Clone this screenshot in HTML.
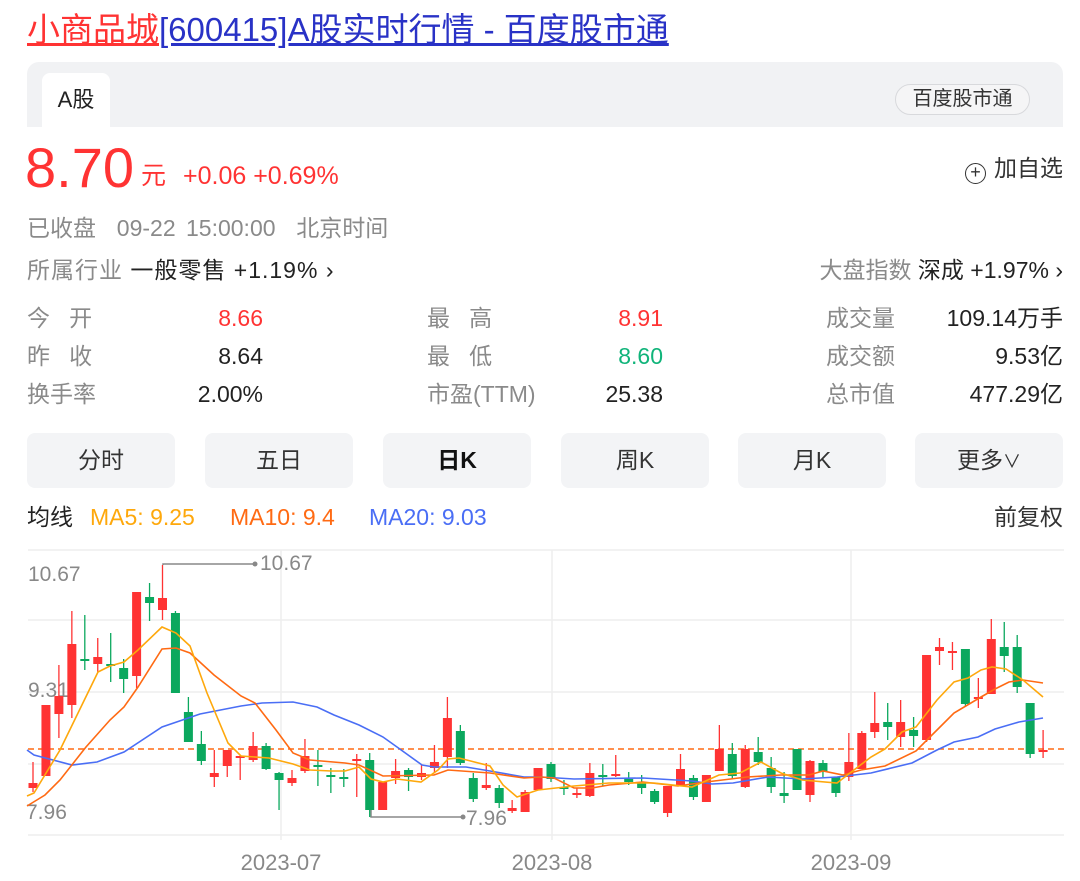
<!DOCTYPE html>
<html><head><meta charset="utf-8"><style>
*{margin:0;padding:0;box-sizing:border-box}
body{width:1080px;height:881px;background:#fff;font-family:"Liberation Sans","Noto Sans CJK SC",sans-serif;color:#222;position:relative;overflow:hidden}
.a{position:absolute;white-space:nowrap}
.g{color:#8a8a8a}
.r{color:#f33}
.btn{position:absolute;top:433px;width:148px;height:55px;background:#f3f4f6;border-radius:8px;font-size:23px;line-height:55px;text-align:center;color:#333}
.lab{font-size:23px;color:#8a8a8a}
.val{font-size:23px;text-align:right}
</style></head><body>
<div class="a" style="left:27px;top:9px;font-size:33px;line-height:42px;letter-spacing:0px"><span style="color:#f33;text-decoration:underline">小商品城</span><span style="color:#2932c6;text-decoration:underline">[600415]A股实时行情 - 百度股市通</span></div>
<div class="a" style="left:27px;top:62px;width:1036px;height:65px;background:#f1f2f4;border-radius:12px 12px 0 0"></div>
<div class="a" style="left:42px;top:73px;width:68px;height:54px;background:#fff;border-radius:8px 8px 0 0;font-size:22px;line-height:54px;text-align:center">A股</div>
<div class="a" style="left:895px;top:84px;width:135px;height:31px;border:1px solid #d8d9dc;border-radius:16px;background:#f5f5f6;font-size:20px;line-height:29px;text-align:center;color:#333">百度股市通</div>
<div class="a r" style="left:25px;top:136px;font-size:56px;line-height:64px">8.70</div>
<div class="a r" style="left:141px;top:160px;font-size:25px;line-height:32px">元</div>
<div class="a r" style="left:183px;top:160px;font-size:25px;line-height:32px">+0.06 +0.69%</div>
<div class="a" style="right:17px;top:153px;font-size:23px;line-height:30px;color:#333"><span style="display:inline-block;width:21px;height:21px;border:1.5px solid #333;border-radius:50%;text-align:center;line-height:17px;font-size:18px;vertical-align:-2px;margin-right:8px">+</span>加自选</div>
<div class="a g" style="left:27px;top:213px;font-size:23px;line-height:30px;word-spacing:4px">已收盘&nbsp; 09-22 15:00:00&nbsp; 北京时间</div>
<div class="a" style="left:27px;top:255px;font-size:23px;line-height:30px;letter-spacing:1px"><span class="g">所属行业</span> 一般零售 +1.19% ›</div>
<div class="a" style="right:17px;top:255px;font-size:23px;line-height:30px"><span class="g">大盘指数</span> 深成 +1.97% ›</div>

<div class="a lab" style="left:27px;top:303px;line-height:30px">今&nbsp;&nbsp;&nbsp;开</div>
<div class="a lab" style="left:27px;top:341px;line-height:30px">昨&nbsp;&nbsp;&nbsp;收</div>
<div class="a lab" style="left:27px;top:379px;line-height:30px">换手率</div>
<div class="a val r" style="right:817px;top:303px;line-height:30px">8.66</div>
<div class="a val" style="right:817px;top:341px;line-height:30px">8.64</div>
<div class="a val" style="right:817px;top:379px;line-height:30px">2.00%</div>
<div class="a lab" style="left:427px;top:303px;line-height:30px">最&nbsp;&nbsp;&nbsp;高</div>
<div class="a lab" style="left:427px;top:341px;line-height:30px">最&nbsp;&nbsp;&nbsp;低</div>
<div class="a lab" style="left:427px;top:379px;line-height:30px">市盈(TTM)</div>
<div class="a val r" style="right:417px;top:303px;line-height:30px">8.91</div>
<div class="a val" style="right:417px;top:341px;line-height:30px;color:#10b47a">8.60</div>
<div class="a val" style="right:417px;top:379px;line-height:30px">25.38</div>
<div class="a lab" style="left:826px;top:303px;line-height:30px">成交量</div>
<div class="a lab" style="left:826px;top:341px;line-height:30px">成交额</div>
<div class="a lab" style="left:826px;top:379px;line-height:30px">总市值</div>
<div class="a val" style="right:17px;top:303px;line-height:30px">109.14万手</div>
<div class="a val" style="right:17px;top:341px;line-height:30px">9.53亿</div>
<div class="a val" style="right:17px;top:379px;line-height:30px">477.29亿</div>

<div class="btn" style="left:27px">分时</div>
<div class="btn" style="left:205px">五日</div>
<div class="btn" style="left:383px;font-weight:bold;color:#111">日K</div>
<div class="btn" style="left:561px">周K</div>
<div class="btn" style="left:738px">月K</div>
<div class="btn" style="left:915px">更多<span style="font-size:18px">∨</span></div>

<div class="a" style="left:27px;top:502px;font-size:23px;line-height:30px">均线</div>
<div class="a" style="left:90px;top:502px;font-size:23px;line-height:30px;color:#fea80c">MA5: 9.25</div>
<div class="a" style="left:230px;top:502px;font-size:23px;line-height:30px;color:#ff6a13">MA10: 9.4</div>
<div class="a" style="left:369px;top:502px;font-size:23px;line-height:30px;color:#4a6ef5">MA20: 9.03</div>
<div class="a" style="right:17px;top:502px;font-size:23px;line-height:30px;color:#333">前复权</div>

<svg class="a" style="left:0;top:0" width="1080" height="881" viewBox="0 0 1080 881">
<g stroke="#eeeeee" stroke-width="1.5">
<line x1="28" y1="550" x2="1064" y2="550"/><line x1="28" y1="620" x2="1064" y2="620"/><line x1="28" y1="692" x2="1064" y2="692"/><line x1="28" y1="764" x2="1064" y2="764"/><line x1="28" y1="835" x2="1064" y2="835"/>
<line x1="281" y1="550" x2="281" y2="840"/><line x1="552" y1="550" x2="552" y2="840"/><line x1="851" y1="550" x2="851" y2="840"/>
</g>
<g font-family="Liberation Sans, sans-serif" font-size="21" fill="#888">
<text x="28" y="581">10.67</text><text x="28" y="697">9.31</text><text x="26" y="819">7.96</text>
<text x="260" y="570">10.67</text><text x="466" y="825">7.96</text>
<text x="281" y="870" text-anchor="middle" font-size="22">2023-07</text><text x="552" y="870" text-anchor="middle" font-size="22">2023-08</text><text x="851" y="870" text-anchor="middle" font-size="22">2023-09</text>
</g>
<g stroke="#888" stroke-width="1.5" fill="none"><polyline points="163,565 163,564 255,564"/><polyline points="371,810 371,817 463,817"/></g>
<circle cx="255" cy="564" r="2.5" fill="#888"/><circle cx="463" cy="817" r="2.5" fill="#888"/>
<line x1="28" y1="749" x2="1064" y2="749" stroke="#ff6a13" stroke-width="1.5" stroke-dasharray="6,4"/>
<g id="c"></g>
<polyline fill="none" stroke="#4a6ef5" stroke-width="1.6" points="27,750 34,755 72,765 97,762 124,752 162,727 200,714 241,706 262,703 293,702 317,707 334,715 359,725 383,737 397,747 422,765 434,767 466,767 490,771 524,777 541,777 574,779 643,778 692,781 712,784 733,783 768,777 802,779 837,777 871,773 912,763 937,750 954,742 978,737 995,729 1019,722 1043,718"/>
<polyline fill="none" stroke="#ff6a13" stroke-width="1.6" points="27,806 45,795 60,780 86,747 110,720 124,707 138,687 162,649 176,648 190,653 214,675 241,696 255,703 276,730 293,753 310,760 345,763 359,765 383,776 434,775 448,770 490,773 524,778 541,777 554,778 574,788 592,788 609,785 643,782 678,786 706,782 747,777 781,775 809,775 823,771 843,775 861,770 885,766 916,751 937,730 954,713 981,697 995,689 1009,682 1023,680 1043,683"/>
<polyline fill="none" stroke="#fea80c" stroke-width="1.6" points="27,796 34,793 60,750 98,672 110,666 124,662 138,650 162,627 176,633 190,646 207,693 228,743 241,756 269,758 293,764 310,770 331,771 345,771 359,767 371,779 383,782 397,779 421,782 438,770 448,759 459,758 490,766 503,785 517,797 538,790 574,786 609,783 654,783 692,787 719,775 740,773 761,762 781,773 802,780 837,783 850,773 871,757 885,749 902,732 916,727 937,700 954,682 968,678 981,670 992,667 1006,669 1023,680 1043,697"/>
</svg>
<script>
var d=[
["r",783,788,762,792],["r",705,776,705,776],["r",696,714,665,738],["r",644,705,611,718],["g",659,661,615,670],["r",657,664,638,672],["g",664,666,633,682],["g",668,679,659,693],["r",592,676,592,688],["g",597,603,583,621],["r",598,610,565,620],["g",613,693,611,693],
["g",712,742,697,742],["g",744,761,731,765],["r",773,777,750,787],["r",750,766,750,777],["r",756,758,755,780],["r",746,760,732,762],["g",746,769,743,770],["g",773,780,772,810],["r",778,783,770,786],["r",756,771,739,773],["g",765,767,750,786],["g",775,777,768,793],["g",777,779,769,787],["r",759,761,754,797],["g",760,810,753,817],["r",782,810,782,810],["r",771,778,759,784],["g",770,777,768,791],["r",773,777,764,780],["r",762,768,745,772],["r",718,757,697,768],["g",731,763,725,765],["g",778,799,773,802],["r",785,788,763,790],["g",788,803,785,808],["r",808,811,800,813],["r",792,812,790,812],
["r",768,790,768,790],["g",764,779,762,782],["g",787,789,780,795],["r",793,795,788,798],["r",773,796,763,797],["g",775,777,764,786],["r",774,776,755,777],["g",779,782,772,785],["g",782,788,775,794],["g",791,802,789,804],["r",786,813,786,817],["r",769,785,754,785],["g",778,797,775,800],["r",775,802,775,802],["r",749,771,725,771],["g",754,776,743,779],["r",749,787,745,788],["g",752,762,737,765],["g",768,787,757,793],["g",793,796,772,803],["g",749,790,749,790],["r",761,795,760,802],["g",763,772,760,777],["g",777,793,777,797],["r",762,777,733,781],["r",733,769,731,769],["r",723,732,692,738],["g",722,727,703,740],["r",722,737,700,747],["g",730,736,717,747],["r",655,740,655,742],["r",647,651,638,665],["r",651,653,642,670],["g",649,704,649,707],["r",697,699,678,708],["r",639,694,619,694],["g",647,656,622,672],["g",647,687,635,693],["g",703,754,703,758],["r",750,752,730,758]];
var s="";for(var i=0;i<d.length;i++){var x=33+12.95*i,c=d[i][0]=="r"?"#f33":"#0ba85e",h=Math.max(2,d[i][2]-d[i][1]);
s+='<line x1="'+x+'" x2="'+x+'" y1="'+d[i][3]+'" y2="'+d[i][4]+'" stroke="'+c+'" stroke-width="1.3"/><rect x="'+(x-4.5)+'" y="'+d[i][1]+'" width="9" height="'+h+'" fill="'+c+'"/>';}
document.getElementById("c").innerHTML=s;
</script>
</body></html>
